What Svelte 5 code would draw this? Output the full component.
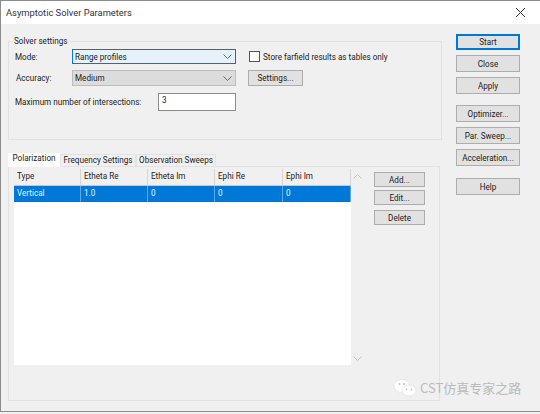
<script>
  const columns = [
    { name: 'Type', width: 67, value: 'Vertical' },
    { name: 'Etheta Re', width: 67, value: '1.0' },
    { name: 'Etheta Im', width: 67, value: '0' },
    { name: 'Ephi Re', width: 68, value: '0' },
    { name: 'Ephi Im', width: 68, value: '0' }
  ];
</script>

<div class="window">
  <header class="title">
    <span>Asymptotic Solver Parameters</span>
    <svg class="close" width="11" height="11" viewBox="0 0 11 11"><path d="M1 1l9 9M10 1l-9 9" stroke="#333" stroke-width="1" fill="none" /></svg>
  </header>
  <div class="body">
    <main class="main">
      <fieldset class="group">
        <legend>Solver settings</legend>
        <div class="row r1">
          <span class="lbl mode">Mode:</span>
          <div class="select focus">
            <span>Range profiles</span>
            <svg width="9" height="5" viewBox="0 0 9 5"><path d="M.5.5l4 4 4-4" stroke="#666" fill="none" /></svg>
          </div>
          <span class="check"></span>
          <span class="checklabel">Store farfield results as tables only</span>
        </div>
        <div class="row r2">
          <span class="lbl acc">Accuracy:</span>
          <div class="select dis">
            <span>Medium</span>
            <svg width="9" height="5" viewBox="0 0 9 5"><path d="M.5.5l4 4 4-4" stroke="#666" fill="none" /></svg>
          </div>
          <button class="btn settings">Settings...</button>
        </div>
        <div class="row r3">
          <span class="lbl max">Maximum number of intersections:</span>
          <div class="input">3</div>
        </div>
      </fieldset>

      <div class="tabs">
        <div class="tab active">Polarization</div>
        <div class="tab">Frequency Settings</div>
        <div class="tab">Observation Sweeps</div>
      </div>
      <section class="panel">
        <div class="tablewrap">
          <div class="table">
            <div class="thead">
              {#each columns as c}<div class="th" style="width:{c.width}px">{c.name}</div>{/each}
            </div>
            <div class="tr">
              {#each columns as c}<div class="td" style="width:{c.width}px">{c.value}</div>{/each}
            </div>
          </div>
          <div class="scroll">
            <svg width="9" height="5" viewBox="0 0 9 5"><path d="M.5 4.5l4-4 4 4" stroke="#c4c4c4" fill="none" /></svg>
            <svg width="9" height="5" viewBox="0 0 9 5"><path d="M.5.5l4 4 4-4" stroke="#c4c4c4" fill="none" /></svg>
          </div>
        </div>
        <div class="side">
          <button class="btn small">Add...</button>
          <button class="btn small edit">Edit...</button>
          <button class="btn small del">Delete</button>
        </div>
      </section>
    </main>
    <aside class="actions">
      <button class="btn big start">Start</button>
      <button class="btn big">Close</button>
      <button class="btn big">Apply</button>
      <button class="btn big sep">Optimizer...</button>
      <button class="btn big">Par. Sweep...</button>
      <button class="btn big">Acceleration...</button>
      <button class="btn big sep2">Help</button>
    </aside>
  </div>
  <div class="watermark">
    <svg width="24" height="18" viewBox="0 0 24 18">
      <ellipse cx="9" cy="7" rx="8" ry="6.5" fill="#fff" stroke="#ddd" stroke-width=".6" />
      <ellipse cx="16" cy="11.5" rx="7" ry="5.5" fill="#fff" stroke="#ddd" stroke-width=".6" />
      <circle cx="6.5" cy="5" r="1" fill="#c4c4c4" />
      <circle cx="11" cy="5" r="1" fill="#c4c4c4" />
      <circle cx="13.5" cy="10.5" r=".9" fill="#c4c4c4" />
      <circle cx="18.5" cy="10.5" r=".9" fill="#c4c4c4" />
    </svg>
    <span>CST仿真专家之路</span>
  </div>
</div>

<style>
  :global(body) { margin: 0; background: #f0f0f0; }
  .window {
    position: relative;
    box-sizing: border-box;
    width: 540px;
    height: 412px;
    background: #f0f0f0;
    border: 1px solid #8c8c8c;
    border-right: none;
    font: 8.15px Roboto, "Liberation Sans", sans-serif;
    color: #222;
    overflow: hidden;
    white-space: nowrap;
  }
  .title {
    height: 23px;
    background: #fff;
    display: flex;
    align-items: center;
    justify-content: space-between;
    padding: 0 14px 0 5px;
    font-size: 9.35px;
    color: #333;
  }
  .body { display: flex; padding: 0 0 0 7px; }
  .main { width: 434px; }
  .group {
    box-sizing: border-box;
    margin: 12px 0 0;
    padding: 0;
    height: 104px;
    width: 434px;
    border: 1px solid #e2e2e2;
    position: relative;
  }
  legend { margin-left: 4px; padding: 0 1px; line-height: 11px; }
  .row { display: flex; align-items: center; }
  .r1 { height: 15px; margin-top: 2px; }
  .r2 { height: 16px; margin-top: 6px; }
  .r3 { height: 18px; margin-top: 7px; }
  .lbl { display: block; box-sizing: border-box; padding-left: 6px; }
  .mode { width: 63px; }
  .acc { width: 63px; padding-left: 7px; }
  .max { width: 149px; }
  .select {
    box-sizing: border-box;
    width: 164px;
    height: 100%;
    display: flex;
    align-items: center;
    justify-content: space-between;
    padding: 0 3px 0 2px;
    border: 1px solid #b4b4b4;
  }
  .select.focus { background: #e5f1fb; border-color: #0078d7; }
  .select.dis { background: #dcdcdc; border-color: #bdbdbd; }
  .check {
    box-sizing: border-box;
    width: 11px;
    height: 11px;
    background: #fff;
    border: 1px solid #555;
    margin-left: 13px;
  }
  .checklabel { margin-left: 3px; }
  .input {
    box-sizing: border-box;
    width: 78px;
    height: 100%;
    background: #fff;
    border: 1px solid #8d8d8d;
    padding: 0 3px;
    line-height: 13px;
  }
  .btn {
    display: block;
    box-sizing: border-box;
    padding: 0;
    background: #e1e1e1;
    border: 1px solid #adadad;
    font: inherit;
    color: inherit;
    text-align: center;
  }
  .settings { width: 55px; height: 16px; margin-left: 12px; }
  .tabs { display: flex; margin-top: 13px; height: 13px; align-items: flex-end; position: relative; z-index: 1; }
  .tab {
    box-sizing: border-box;
    height: 12px;
    line-height: 11px;
    text-align: center;
    border: 1px solid #e2e2e2;
    border-bottom: none;
  }
  .tab:nth-child(1) { width: 52px; }
  .tab:nth-child(2) { width: 76px; }
  .tab:nth-child(3) { width: 80px; }
  .tab.active { height: 14px; background: #fff; border: none; margin-bottom: -1px; }
  .panel {
    box-sizing: border-box;
    width: 432px;
    height: 235px;
    border: 1px solid #e2e2e2;
    display: flex;
    padding: 2px 0 0 5px;
  }
  .tablewrap { display: flex; height: 196px; }
  .table { width: 337px; background: #fff; }
  .thead { display: flex; height: 17px; background: #f0f0f0; border-bottom: 1px solid #c8c8c8; box-sizing: border-box; }
  .th {
    box-sizing: border-box;
    padding: 0 0 0 3px;
    border-right: 1px solid #d5d5d5;
    line-height: 15px;
  }
  .tr { display: flex; height: 16px; background: #0078d7; color: #eaf3fb; }
  .td {
    box-sizing: border-box;
    padding-left: 3px;
    border-right: 1px solid #5fa8e3;
    line-height: 15px;
  }
  .scroll {
    width: 13px;
    display: flex;
    flex-direction: column;
    align-items: center;
    justify-content: space-between;
    padding: 5px 0 4px;
    box-sizing: border-box;
  }
  .side { margin-left: 10px; padding-top: 3px; }
  .small { width: 51px; height: 15px; }
  .edit { margin-top: 3px; }
  .del { margin-top: 5px; }
  .actions { margin-left: 14px; padding-top: 10px; }
  .big { width: 64px; height: 17px; margin-bottom: 5px; }
  .start { border: 2px solid #0078d7; height: 16px; }
  .sep { margin-top: 11px; }
  .sep2 { margin-top: 12px; }
  .watermark {
    position: absolute;
    left: 392px;
    top: 377px;
    display: flex;
    align-items: center;
    gap: 3px;
    font: 13px "Noto Sans CJK SC", "Noto Sans", sans-serif;
    color: #bbb;
  }
</style>
